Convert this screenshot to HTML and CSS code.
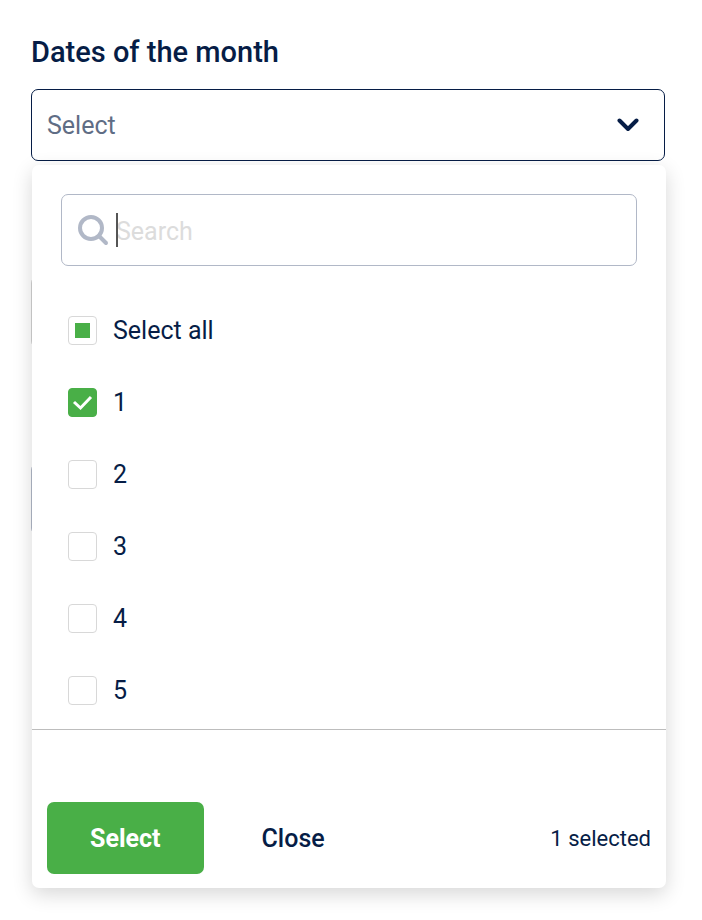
FILE: index.html
```html
<!DOCTYPE html>
<html lang="en">
<head>
<meta charset="utf-8">
<meta name="viewport" content="width=device-width, initial-scale=1">
<title>Dates of the month</title>
<link rel="stylesheet" href="styles.css">
</head>
<body>
<main class="form">
  <label class="form-label" for="dates">Dates of the month</label>
  <div class="dropdown">
    <div class="trigger">
      <select class="trigger-select" id="dates">
        <option>Select</option>
      </select>
      <svg class="chevron" viewBox="0 0 22 14" aria-hidden="true"><path d="M2.500 2.500l8.500 8.500 8.500-8.500"/></svg>
    </div>
    <section class="panel" aria-label="Dates">
      <div class="search">
        <svg class="search-icon" viewBox="0 0 32 32" aria-hidden="true"><circle cx="14" cy="14" r="11"/><path d="M22 22L29 29"/></svg>
        <div class="search-field">
          <input class="search-input" type="text" placeholder="Search" aria-label="Search">
          <span class="caret"></span>
        </div>
      </div>
      <ul class="options">
        <li><label class="option"><input class="check check-mixed" type="checkbox">Select all</label></li>
        <li><label class="option"><span class="check-wrap"><input class="check" type="checkbox" checked><svg class="tick" viewBox="0 0 29 29" aria-hidden="true"><path d="M6 14l6.500 6L23 9"/></svg></span>1</label></li>
        <li><label class="option"><input class="check" type="checkbox">2</label></li>
        <li><label class="option"><input class="check" type="checkbox">3</label></li>
        <li><label class="option"><input class="check" type="checkbox">4</label></li>
        <li><label class="option"><input class="check" type="checkbox">5</label></li>
      </ul>
      <footer class="actions">
        <button class="button button-primary" type="button">Select</button>
        <button class="button" type="button">Close</button>
        <span class="count">1 selected</span>
      </footer>
    </section>
  </div>
  <div class="field field-light"></div>
  <div class="field"></div>
</main>
</body>
</html>
```
FILE: styles.css
```css
* {
  box-sizing: border-box;
}

body {
  margin: 0;
  min-height: 100vh;
  background: #fff;
  color: #061d46;
  font-family: Roboto, "Liberation Sans", sans-serif;
  font-size: 25px;
  line-height: 33px;
}

.form {
  padding: 36px 37px 32px 31px;
}

.form-label {
  display: block;
  margin-bottom: 21px;
  font-size: 29px;
  font-weight: 500;
  line-height: 32px;
}

.dropdown,
.trigger,
.search-field {
  position: relative;
}

.trigger-select {
  display: block;
  width: 100%;
  height: 72px;
  padding: 0 64px 0 15px;
  appearance: none;
  border: 1px solid #061d46;
  border-radius: 7px;
  background: #fff;
  color: #5f6d85;
  font: inherit;
}

.chevron {
  position: absolute;
  top: 29px;
  right: 26px;
  width: 22px;
  height: 14px;
  pointer-events: none;
}

.chevron path {
  fill: none;
  stroke: #061d46;
  stroke-width: 4;
  stroke-linecap: round;
  stroke-linejoin: round;
}

.panel {
  position: absolute;
  z-index: 1;
  top: 76px;
  right: -1px;
  left: 1px;
  padding-top: 29px;
  border-radius: 7px;
  background: #fff;
  box-shadow: 0 6px 20px rgba(0, 0, 0, 0.16);
}

.search {
  display: flex;
  align-items: center;
  gap: 7px;
  height: 72px;
  margin: 0 29px 28px;
  padding: 0 15px;
  border: 1px solid #b1b8c7;
  border-radius: 7px;
}

.search-icon {
  flex: none;
  width: 32px;
  height: 32px;
  fill: none;
  stroke: #b1b8c7;
  stroke-width: 4;
  stroke-linecap: round;
}

.search-field {
  flex: 1;
}

.search-input {
  display: block;
  width: 100%;
  height: 34px;
  padding: 2px 0 0;
  border: 0;
  outline: 0;
  background: transparent;
  color: inherit;
  font: inherit;
}

.search-input::placeholder {
  color: #dcdcdc;
  opacity: 1;
}

.caret {
  position: absolute;
  top: 0;
  left: 0;
  width: 2px;
  height: 34px;
  background: #555;
}

.options {
  margin: 0;
  padding: 0 36px 3px;
  list-style: none;
}

.option {
  display: flex;
  align-items: center;
  gap: 16px;
  height: 72px;
}

.check {
  display: block;
  flex: none;
  width: 29px;
  height: 29px;
  margin: 0;
  appearance: none;
  border: 1px solid #d8d8d8;
  border-radius: 4px;
  background: #fff;
}

.check:checked {
  border-color: #49af47;
  background: #49af47;
}

.check-mixed {
  background: linear-gradient(#49af47, #49af47) center / 15px 15px no-repeat;
}

.check-wrap {
  position: relative;
}

.tick {
  position: absolute;
  inset: 0;
  fill: none;
  stroke: #fff;
  stroke-width: 3;
  pointer-events: none;
}

.actions {
  display: flex;
  align-items: center;
  gap: 15px;
  padding: 72px 15px 14px;
  border-top: 1px solid #bdbdbd;
}

.button {
  height: 72px;
  padding: 0 43px;
  border: 0;
  border-radius: 7px;
  background: transparent;
  color: inherit;
  font: inherit;
  font-weight: 500;
}

.button-primary {
  background: #49af47;
  color: #fff;
  font-weight: 700;
}

.count {
  margin-left: auto;
  font-size: 22px;
}

.field {
  height: 72px;
  margin-top: 115px;
  border: 1px solid #b1b8c7;
  border-radius: 7px;
}

.field-light {
  border-color: #d2d2d2;
}
```
